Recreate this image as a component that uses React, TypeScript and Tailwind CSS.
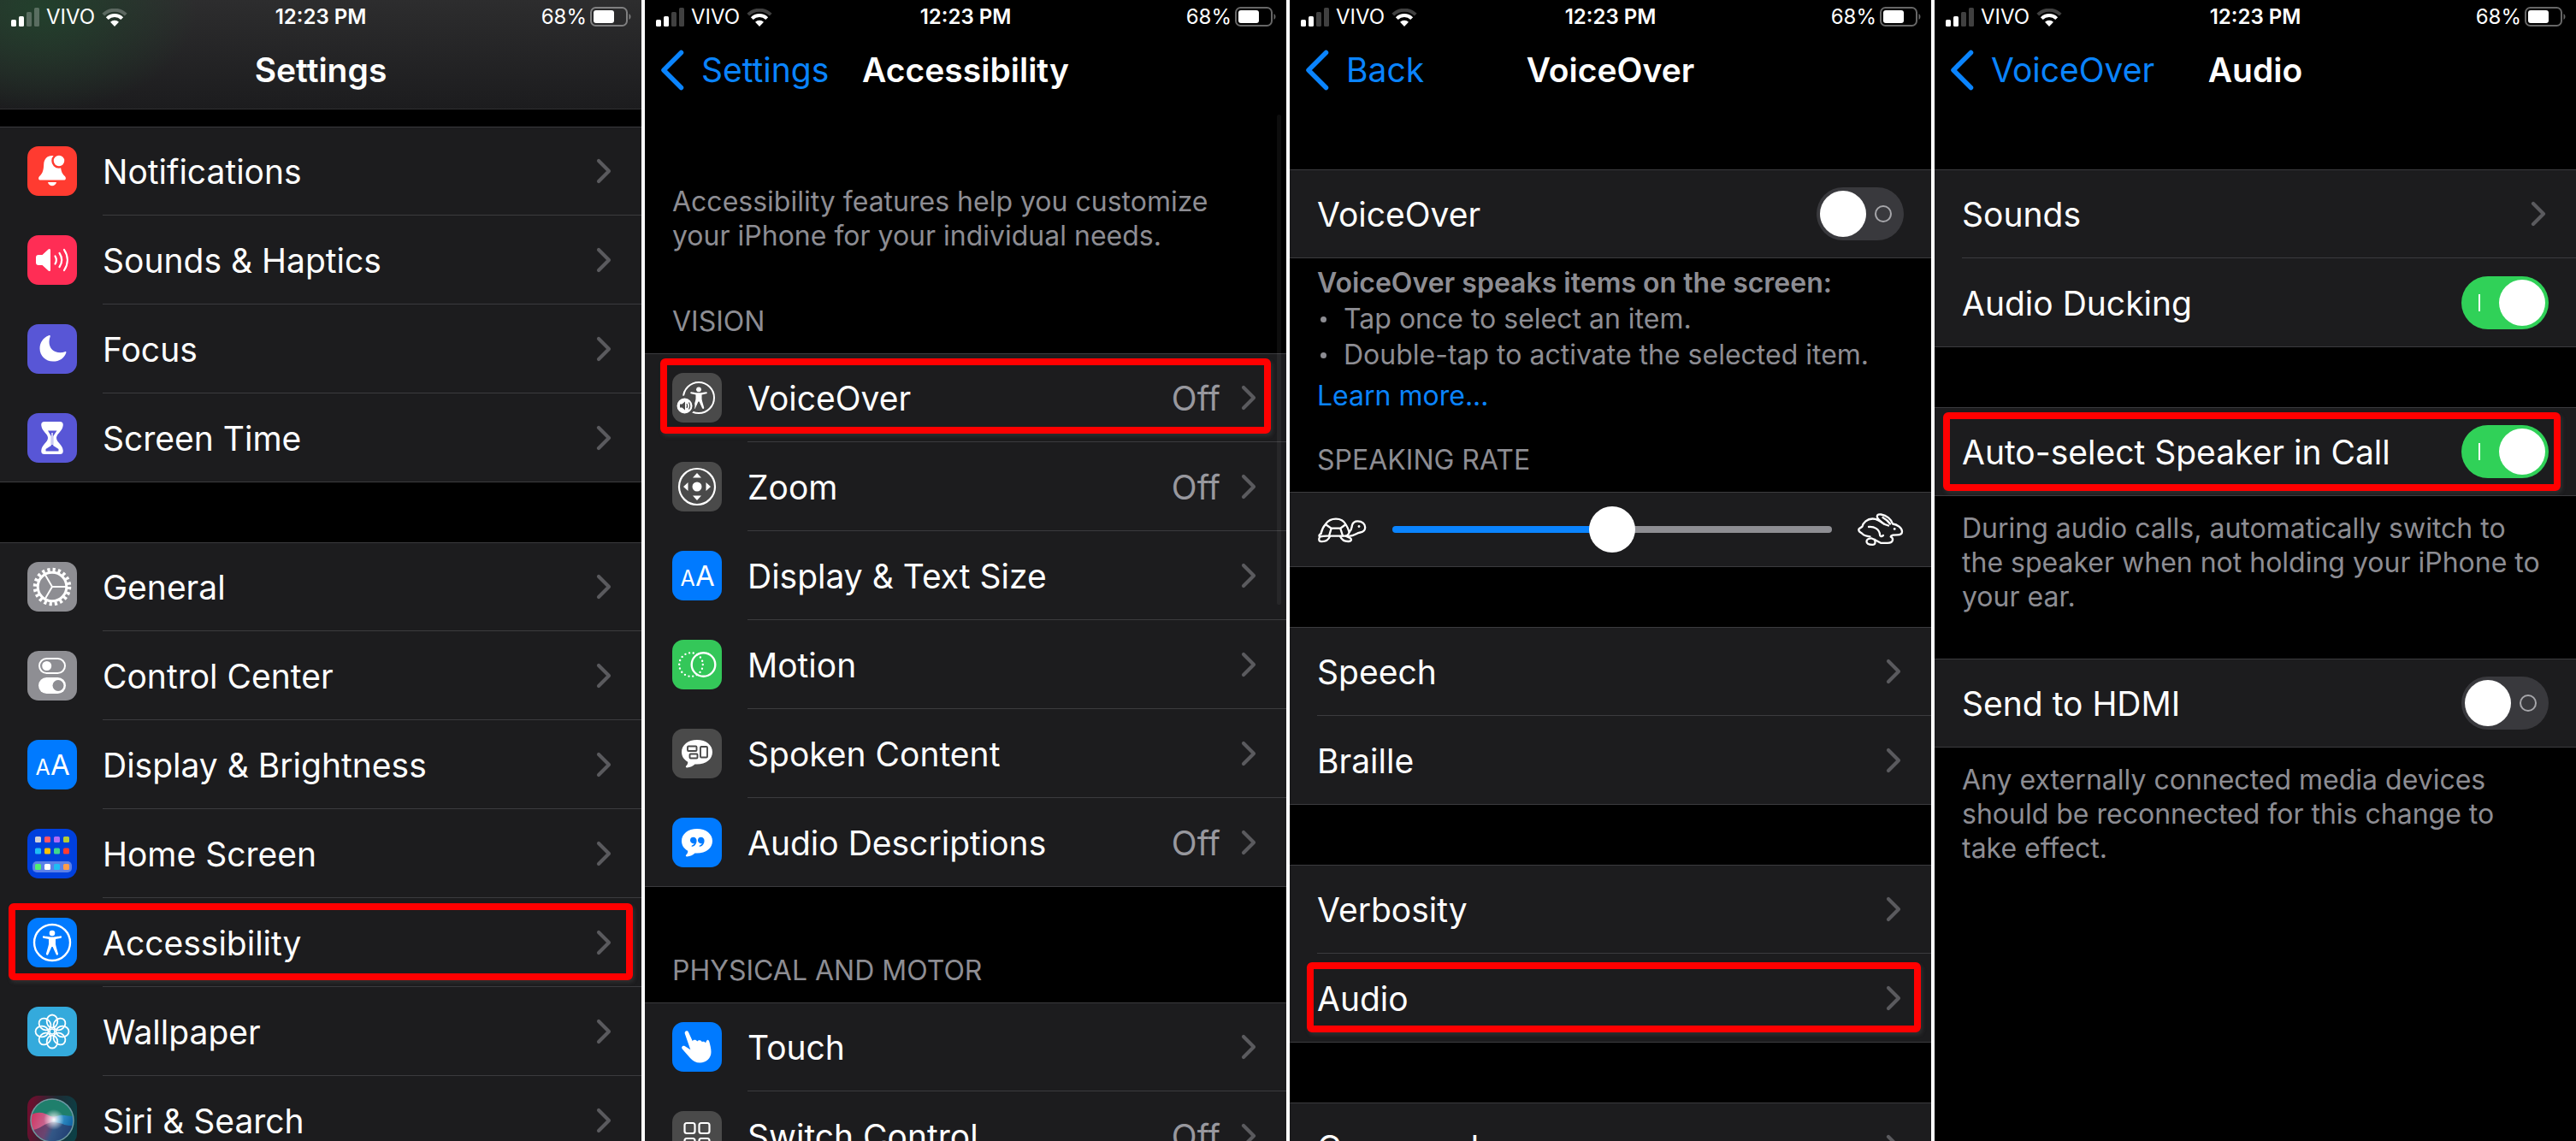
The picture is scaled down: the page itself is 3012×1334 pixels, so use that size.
import React, { useState } from "react";

interface IRow {
  label: string;
  icon?: React.ReactNode;
  value?: string;
  highlight?: string;
}

interface IToggleRow {
  label: string;
  defaultOn?: boolean;
  highlight?: string;
}

/* ---------- status bar ---------- */

const StatusBar = () => (
  <div className="grid h-10 grid-cols-[1fr_auto_1fr] items-center pl-3 pr-3 text-[24px] leading-8">
    <div className="flex items-center gap-2">
      <svg viewBox="0 0 34 22" className="h-[22px] w-[34px]" fill="white">
        <rect x="1" y="14" width="6" height="8" rx="1.5" />
        <rect x="10" y="10" width="6" height="12" rx="1.5" />
        <rect x="19" y="5" width="6" height="17" rx="1.5" opacity="0.25" />
        <rect x="28" y="0" width="6" height="22" rx="1.5" opacity="0.25" />
      </svg>
      <span>VIVO</span>
      <svg viewBox="0 0 30 21" className="h-[21px] w-[30px]" fill="none">
        <path d="M1.8 7.2a18.6 18.6 0 0 1 26.4 0" stroke="white" strokeWidth="4" opacity="0.25" />
        <path d="M6.3 11.7a12.3 12.3 0 0 1 17.4 0" stroke="white" strokeWidth="4" />
        <path d="M10 15.8a7 7 0 0 1 10 0l-5 5.2z" fill="white" />
      </svg>
    </div>
    <span className="font-semibold">12:23 PM</span>
    <div className="flex items-center justify-end gap-1">
      <span>68%</span>
      <svg viewBox="0 0 48 24" className="h-6 w-12" fill="none">
        <rect x="1" y="1" width="42" height="21" rx="5.5" stroke="white" strokeOpacity="0.4" strokeWidth="2" />
        <rect x="4" y="4" width="24" height="15" rx="3" fill="white" />
        <path d="M45.5 8v7c1.4-.7 1.9-2 1.9-3.5s-.5-2.8-1.900-3.500z" fill="white" fillOpacity="0.4" />
      </svg>
    </div>
  </div>
);

const Header = ({
  title,
  back,
  tinted,
}: {
  title: string;
  back?: string;
  tinted?: boolean;
}) => (
  <header
    className={
      tinted
        ? "shrink-0 bg-[radial-gradient(ellipse_180px_120px_at_50px_10px,#22402c_0%,transparent_100%),linear-gradient(to_bottom,#2d2d2e,#1c1c1e)] pb-1 shadow-[inset_0_-1px_#303032]"
        : "shrink-0 pb-1"
    }
  >
    <StatusBar />
    <div className="grid h-[84px] grid-cols-[1fr_auto_1fr] items-center text-[39px] leading-[48px]">
      <div className="flex">
        {back && (
          <a href="#" className="flex items-center gap-5 pl-[18px] text-[#0a84ff]">
            <svg viewBox="0 0 28 48" className="h-12 w-7" fill="none">
              <path
                d="M24.5 3.5L4 24l20.5 20.5"
                stroke="currentColor"
                strokeWidth="5.5"
                strokeLinecap="round"
                strokeLinejoin="round"
              />
            </svg>
            {back}
          </a>
        )}
      </div>
      <h1 className="font-semibold">{title}</h1>
    </div>
  </header>
);

/* ---------- list parts ---------- */

const Chevron = () => (
  <svg viewBox="0 0 18 30" className="h-[30px] w-[18px] shrink-0" fill="none">
    <path
      d="M3 3l12 12L3 27"
      stroke="#5a5a5e"
      strokeWidth="4.2"
      strokeLinecap="round"
      strokeLinejoin="round"
    />
  </svg>
);

const Highlight = ({ inset }: { inset: string }) => (
  <span
    className={`pointer-events-none absolute rounded-md border-8 border-[#ff0000] shadow-[2px_3px_4px_rgba(80,80,80,0.35)] ${inset}`}
  />
);

const Group = ({ children }: { children: React.ReactNode }) => (
  <ul className="shrink-0 bg-[#1c1c1e] shadow-[inset_0_1px_#3b3b3e,inset_0_-1px_#3b3b3e]">
    {children}
  </ul>
);

const Row = ({ label, icon, value, highlight }: IRow) => (
  <li className="group relative">
    <a href="#" className="flex h-26 items-center pl-8">
      {icon && <span className="mr-[30px]">{icon}</span>}
      <span className="flex h-full flex-1 items-center gap-6 border-b border-[#3b3b3e] pr-[35px] text-[39px] leading-[48px] group-last:border-transparent">
        <span className="flex-1 pt-0.5">{label}</span>
        {value && <span className="pt-0.5 text-[#98989e]">{value}</span>}
        <Chevron />
      </span>
    </a>
    {highlight && <Highlight inset={highlight} />}
  </li>
);

const ToggleRow = ({ label, defaultOn = false, highlight }: IToggleRow) => {
  const [on, setOn] = useState<boolean>(defaultOn);

  return (
    <li className="relative">
      <label className="flex h-26 items-center justify-between pr-8 pl-8 text-[39px] leading-[48px]">
        <span className="pt-0.5">{label}</span>
        <input
          type="checkbox"
          role="switch"
          checked={on}
          onChange={(e) => setOn(e.target.checked)}
          className="flex h-[62px] w-[102px] appearance-none items-center justify-between rounded-full bg-[#39393d] px-1 before:size-[54px] before:rounded-full before:bg-white before:content-[''] after:mr-2.5 after:size-5 after:rounded-full after:border-2 after:border-[#a6a6aa] after:content-[''] checked:flex-row-reverse checked:bg-[#30d158] checked:after:mr-0 checked:after:ml-4 checked:after:w-0.5 checked:after:rounded-none checked:after:border-0 checked:after:bg-white"
        />
      </label>
      {highlight && <Highlight inset={highlight} />}
    </li>
  );
};

const SectionTitle = ({ children }: { children: React.ReactNode }) => (
  <h2 className="shrink-0 px-8 pb-[17px] text-[32px] leading-10 text-[#8d8d93]">
    {children}
  </h2>
);

const Note = ({ children }: { children: React.ReactNode }) => (
  <p className="shrink-0 px-8 pt-[18px] text-[32px] leading-10 text-[#8d8d93]">
    {children}
  </p>
);

/* ---------- row icons ---------- */

const Tile = ({ className, children }: { className: string; children: React.ReactNode }) => (
  <svg viewBox="0 0 58 58" className={`block size-[58px] rounded-[13px] ${className}`} fill="none">
    {children}
  </svg>
);

const NotificationsIcon = () => (
  <Tile className="bg-[#ff3b30]">
    <path
      d="M29 11c-6 0-9.5 4-9.8 10-.3 7-1.2 10.5-5 14-1.8 2-1.4 4.6 1.3 4.6h27c2.7 0 3.1-2.6 1.3-4.6-3.8-3.5-4.7-7-5-14-.3-6-3.8-10-9.8-10z"
      fill="white"
    />
    <path d="M24 42h10c-.5 2.600-2.600 4.200-5 4.200S24.500 44.600 24 42z" fill="white" />
    <circle cx="37" cy="17" r="7.5" fill="white" stroke="#ff3b30" strokeWidth="2.5" />
  </Tile>
);

const SoundsIcon = () => (
  <Tile className="bg-[#ff2d55]">
    <path
      d="M13 23h4.5l7-6.5c1.2-1 2.500-.6 2.500 1v23c0 1.600-1.300 2-2.500 1l-7-6.500H13c-2 0-3-1-3-3v-6c0-2 1-3 3-3z"
      fill="white"
    />
    <g stroke="white" strokeWidth="2.2" strokeLinecap="round">
      <path d="M32.5 24.5c1.7 2.8 1.7 6.2 0 9" />
      <path d="M37.5 20.8c3.3 5 3.3 11.4 0 16.4" />
      <path d="M43 17c5 7.5 5 16.5 0 24" />
    </g>
  </Tile>
);

const FocusIcon = () => (
  <Tile className="bg-[#5856d6]">
    <path
      d="M25 13.2C18.5 15.5 14.5 21.5 14.5 28.5 14.5 37 21.5 43.6 30 43.6c7.5 0 13-4 15.3-10.2.3-1-.3-1.6-1.3-1.2-1.7.7-3.5 1-5.5 1-8 0-13-5-13-12.500 0-2.300.4-4.300 1.200-6.200.4-1-.5-1.700-1.700-1.300z"
      fill="white"
    />
  </Tile>
);

const ScreenTimeIcon = () => (
  <Tile className="bg-[#5856d6]">
    <path
      d="M20 10h18c3 0 4 1.600 3.700 4.500C41 21.500 34 24 34 29s7 7.500 7.700 14.500c.3 2.900-.7 4.500-3.700 4.500H20c-3 0-4-1.600-3.700-4.500C17 36.500 24 34 24 29s-7-7.500-7.700-14.500C16 11.600 17 10 20 10z"
      fill="white"
    />
    <path d="M24 20.5h10.5L30.2 27v11l6.300 4v2.500h-15V42l6.300-4V27z" fill="#5856d6" />
    <path d="M29 23v14" stroke="white" strokeWidth="1.4" />
  </Tile>
);

const GeneralIcon = () => (
  <Tile className="bg-[#8e8e93]">
    <circle cx="29" cy="29" r="20" stroke="white" strokeWidth="4.5" strokeDasharray="3.2 3.083" />
    <circle cx="29" cy="29" r="16.8" stroke="white" strokeWidth="3" />
    <path d="M29 29h16M29 29l-8.2-14M29 29l-8.2 14" stroke="white" strokeWidth="2" />
  </Tile>
);

const ControlCenterIcon = () => (
  <Tile className="bg-[#8e8e93]">
    <rect x="14" y="9" width="30" height="17" rx="8.5" stroke="white" strokeWidth="2" />
    <circle cx="22.7" cy="17.5" r="5.5" fill="white" />
    <rect x="13" y="31" width="32" height="19" rx="9.5" fill="white" />
    <circle cx="36" cy="40.5" r="6.5" fill="#8e8e93" />
  </Tile>
);

const TextSizeIcon = () => (
  <Tile className="bg-[#007aff]">
    <text x="9.5" y="41" fontSize="25" fill="white">A</text>
    <text x="27" y="41" fontSize="33" fill="white">A</text>
  </Tile>
);

const homeApps = [
  ["#d1d1d6", "#ff5464", "#b26bf5", "#b4cc34"],
  ["#1fbdf5", "#ffc200", "#3fd68f", "#ff3b30"],
  ["#50f070", "#ffffff", "#1fbdf5", "#ff9d4a"],
];

const HomeScreenIcon = () => (
  <Tile className="bg-[#0040dd]">
    <rect x="6" y="38" width="46" height="13" rx="5" fill="#5b80e8" />
    {homeApps.map((apps, row) =>
      apps.map((color, col) => (
        <rect
          key={`${row}-${col}`}
          x={9 + col * 11}
          y={[9, 22.5, 41][row]}
          width="7"
          height="7"
          rx="1.5"
          fill={color}
        />
      ))
    )}
  </Tile>
);

const Person = () => (
  <>
    <circle cx="29" cy="18" r="3.3" fill="white" />
    <path
      d="M19 21.300s6 1.200 10 1.200 10-1.200 10-1.200c1.400 0 1.500 2.100.2 2.400L33 25.100v5.400c0 2 2.600 9.500 3 11.500.3 1.800-1.800 2.400-2.400.8L29.600 34h-1.200l-4 8.800c-.6 1.600-2.700 1-2.400-.8.4-2 3-9.500 3-11.500v-5.400l-6.200-1.400c-1.300-.3-1.200-2.400.2-2.400z"
      fill="white"
    />
  </>
);

const AccessibilityIcon = () => (
  <Tile className="bg-[#007aff]">
    <circle cx="29" cy="29" r="21" stroke="white" strokeWidth="2.4" />
    <Person />
  </Tile>
);

const WallpaperIcon = () => (
  <Tile className="bg-[#34aadc]">
    {[0, 45, 90, 135, 180, 225, 270, 315].map((angle) => (
      <ellipse
        key={angle}
        cx="29"
        cy="17"
        rx="6.3"
        ry="7.5"
        transform={`rotate(${angle} 29 29)`}
        stroke="white"
        strokeWidth="1.8"
      />
    ))}
    <circle cx="29" cy="29" r="3" stroke="white" strokeWidth="1.6" />
  </Tile>
);

const SiriIcon = () => (
  <Tile className="bg-[linear-gradient(100deg,#6b0f2e_10%,#1f2a33_50%,#0c3f45_90%)]">
    <defs>
      <radialGradient id="siri-glow" cx="0.5" cy="0.5" r="0.5">
        <stop offset="0" stopColor="white" />
        <stop offset="0.25" stopColor="white" stopOpacity="0.7" />
        <stop offset="1" stopColor="white" stopOpacity="0" />
      </radialGradient>
      <linearGradient id="siri-body" x1="0" y1="0.3" x2="1" y2="0.7">
        <stop offset="0" stopColor="#d0305c" />
        <stop offset="0.45" stopColor="#c66f9a" />
        <stop offset="0.6" stopColor="#3a9bd0" />
        <stop offset="1" stopColor="#0a5c9c" />
      </linearGradient>
    </defs>
    <circle cx="29" cy="29" r="25" fill="url(#siri-body)" />
    <path d="M5 22C10 9 20 4.500 29 4.500S50 11 53 24c-6 0-10-2-15-1s-8 3-13 0-12-5-20-1z" fill="#1f7f6c" />
    <path d="M7 40c8-1 13-8 22-9s15 5 24 4c-3 12-13 18.500-24 18.500S11 50 7 40z" fill="#2f2a55" opacity="0.6" />
    <circle cx="29" cy="29" r="25" stroke="#6f9aa0" strokeWidth="1.5" />
    <circle cx="31" cy="28" r="12" fill="url(#siri-glow)" />
  </Tile>
);

const VoiceOverIcon = () => (
  <Tile className="bg-[#4a4a4a]">
    <circle cx="31" cy="29" r="18" stroke="white" strokeWidth="2" />
    <g transform="translate(5.500 3.500) scale(0.88)">
      <Person />
    </g>
    <circle cx="14.5" cy="38.5" r="10.5" fill="white" stroke="#4a4a4a" strokeWidth="3" />
    <path d="M9 36.5h2.5l3.500-3v10l-3.500-3H9z" fill="#4a4a4a" />
    <path d="M17 36c.8 1.5.8 3.5 0 5M19.500 34.500c1.400 2.500 1.400 5.500 0 8" stroke="#4a4a4a" strokeWidth="1.2" />
  </Tile>
);

const ZoomIcon = () => (
  <Tile className="bg-[#4a4a4a]">
    <circle cx="29" cy="29" r="21" stroke="white" strokeWidth="2.2" />
    <circle cx="29" cy="29" r="5.5" fill="white" />
    <path d="M29 13l5 5.5H24zM29 45l5-5.500H24zM13 29l5.500-5v10zM45 29l-5.500-5v10z" fill="white" />
  </Tile>
);

const MotionIcon = () => (
  <Tile className="bg-[#34c759]">
    <circle
      cx="22"
      cy="29"
      r="13.8"
      stroke="white"
      strokeWidth="2.4"
      strokeLinecap="round"
      strokeDasharray="0 4.817"
    />
    <circle cx="36.5" cy="29" r="13.8" stroke="white" strokeWidth="2.4" />
  </Tile>
);

const Bubble = () => (
  <path
    d="M29 13c-10.5 0-18 6-18 14.300 0 5 2.700 9 7.200 11.500.3 1.700-.5 3.300-2 4.800-.8 1-.2 1.900 1 1.800 4-.3 7-1.800 9.300-4 .8.200 1.700.2 2.500.2 10.500 0 18-6 18-14.300S39.500 13 29 13z"
    fill="white"
  />
);

const SpokenContentIcon = () => (
  <Tile className="bg-[#4a4a4a]">
    <Bubble />
    <g stroke="#4a4a4a" strokeWidth="1.9">
      <rect x="18" y="20.5" width="10.5" height="5.5" rx="1" />
      <rect x="20.5" y="29.5" width="9" height="5" rx="1" />
      <rect x="33" y="21" width="8" height="12.5" rx="1" />
    </g>
  </Tile>
);

const AudioDescriptionsIcon = () => (
  <Tile className="bg-[#007aff]">
    <Bubble />
    <g fill="#007aff">
      <path d="M24.700 22.700a3.800 3.800 0 0 0-3.700 3.900c0 2.100 1.600 3.600 3.500 3.600.6 0 1 0 1.400-.2-.5 1.200-1.500 2-2.900 2.500-.8.500-.4 1.500.6 1.300 3.200-.9 5-3.700 5-6.900 0-2.500-1.700-4.200-3.900-4.200z" />
      <path d="M33.700 22.700a3.800 3.800 0 0 0-3.700 3.900c0 2.100 1.600 3.600 3.500 3.600.6 0 1 0 1.400-.2-.5 1.200-1.500 2-2.900 2.500-.8.500-.4 1.500.6 1.300 3.200-.9 5-3.700 5-6.900 0-2.500-1.700-4.200-3.900-4.200z" />
    </g>
  </Tile>
);

const TouchIcon = () => (
  <Tile className="bg-[#007aff]">
    <path
      d="M14.8 13.5c-1-3 2.900-4.600 4.200-1.700l4.800 10.400c1-1.700 4.200-2 5.400.3 1.200-1.800 4.600-1.800 5.600.7 1.400-1 3.600-.4 4.200 1.200 1.600-5 3.600-4.500 4.500-1 .8 3.200 2 7 2 11.600 0 7.500-6 12.500-13 12.500-5 0-8.500-2-11.500-5.500l-9.200-10.500c-1.800-2.500.7-4.700 3.200-3.300l6.300 4z"
      fill="white"
    />
  </Tile>
);

const SwitchControlIcon = () => (
  <Tile className="bg-[#4a4a4a]">
    <g stroke="white" strokeWidth="2.2">
      <rect x="14.5" y="14" width="12" height="12" rx="2.5" />
      <rect x="31.5" y="14" width="12" height="12" rx="2.5" />
      <rect x="14.5" y="32" width="12" height="12" rx="2.5" />
      <rect x="31.5" y="32" width="12" height="12" rx="2.5" />
    </g>
  </Tile>
);

const TortoiseIcon = () => (
  <svg
    viewBox="0 0 58 32"
    className="h-8 w-[58px] shrink-0"
    fill="none"
    stroke="white"
    strokeWidth="2.3"
    strokeLinecap="round"
    strokeLinejoin="round"
  >
    <path d="M4.500 21C5.500 16 7.500 12.500 10 9.700 13 5.500 17 3.700 22 3.700s9 1.800 11.500 6.300c1.800 2.800 3 5.500 4 9" />
    <path d="M10.500 10.500l6.200 4.200h10.500l5.800-4.200M16.700 14.700L14 23.500M27.200 14.700l2.800 8.800" />
    <path d="M4.500 21C2.500 22 2 23 2.800 24.500c3-.5 5-.8 8-.8h21c3 0 5-1.500 6-4.700" />
    <path d="M38 18.500c2.500-2 2.300-4.500 3-7.500.8-3 3.300-4.700 6.500-4.700 5 0 8.700 3 8.700 7.200 0 3.500-2 5.500-5.700 6-5.500.7-6.500 5-14.500 4.300" />
    <path d="M2.800 25.500c-1.600 2.800-.3 4.700 2.700 4.700 4 0 8-2.200 9.500-6M27 24c1.500 3.700 4.500 6 9.500 6 4 0 4.500-3 1.500-4.200l-4.500-2" />
    <circle cx="49" cy="12.5" r="1.4" fill="white" stroke="none" />
  </svg>
);

const HareIcon = () => (
  <svg
    viewBox="0 0 54 38"
    className="h-[38px] w-[54px] shrink-0"
    fill="none"
    stroke="white"
    strokeWidth="2.3"
    strokeLinecap="round"
    strokeLinejoin="round"
  >
    <path d="M30.500 12.500C26 8.500 22 6.500 17.500 6.500 11 6.500 6.500 11 5.500 15.500 4 17.500 1.200 17 1.200 19.500S4 22.500 5.500 24c2 2 5 3 9 3.300" />
    <path d="M36 14.500C30 13 22.800 7 22.800 3.800c0-2.300 2.200-2.600 4.700-2.300C34 2.500 39.500 7 41 12.500c5.500.5 11 5 11 9 0 3-2 3.800-5.500 3.800-4 0-7.500 0-7.800 2.200 1.800 1 2.800 2 2.300 4-.5 2.500-3 3.300-6 3.300h-8L20 31" />
    <path d="M20 31c1 3 1 5.800-2.500 5.800s-7-.8-7-3.800c0-2.500 2.500-3.500 5.500-3.700l4 1.700" />
    <path d="M13 16c6.500-.5 12.500 2.500 13 9 0 2.500 2 2.500 4 1M29.500 5c3.500 2 6.500 4.500 8.500 7.500" />
    <circle cx="43.200" cy="18.400" r="1.400" fill="white" stroke="none" />
  </svg>
);

/* ---------- screens ---------- */

const Screen = ({ children }: { children: React.ReactNode }) => (
  <section className="relative flex min-w-0 flex-col overflow-hidden bg-black">
    {children}
  </section>
);

const Spacer = () => <div className="h-[70px] shrink-0" />;

const SettingsScreen = () => (
  <Screen>
    <Header title="Settings" tinted />
    <div className="h-5 shrink-0" />
    <Group>
      <Row label="Notifications" icon={<NotificationsIcon />} />
      <Row label="Sounds & Haptics" icon={<SoundsIcon />} />
      <Row label="Focus" icon={<FocusIcon />} />
      <Row label="Screen Time" icon={<ScreenTimeIcon />} />
    </Group>
    <Spacer />
    <Group>
      <Row label="General" icon={<GeneralIcon />} />
      <Row label="Control Center" icon={<ControlCenterIcon />} />
      <Row label="Display & Brightness" icon={<TextSizeIcon />} />
      <Row label="Home Screen" icon={<HomeScreenIcon />} />
      <Row label="Accessibility" icon={<AccessibilityIcon />} highlight="inset-x-2.5 top-1.5 bottom-2" />
      <Row label="Wallpaper" icon={<WallpaperIcon />} />
      <Row label="Siri & Search" icon={<SiriIcon />} />
    </Group>
  </Screen>
);

const AccessibilityScreen = () => (
  <Screen>
    <Header title="Accessibility" back="Settings" />
    <p className="shrink-0 px-8 pt-[88px] pb-[60px] text-[32px] leading-10 text-[#8d8d93]">
      Accessibility features help you customize your iPhone for your individual needs.
    </p>
    <SectionTitle>VISION</SectionTitle>
    <Group>
      <Row label="VoiceOver" icon={<VoiceOverIcon />} value="Off" highlight="inset-x-[18px] top-1.5 bottom-2.5" />
      <Row label="Zoom" icon={<ZoomIcon />} value="Off" />
      <Row label="Display & Text Size" icon={<TextSizeIcon />} />
      <Row label="Motion" icon={<MotionIcon />} />
      <Row label="Spoken Content" icon={<SpokenContentIcon />} />
      <Row label="Audio Descriptions" icon={<AudioDescriptionsIcon />} value="Off" />
    </Group>
    <div className="h-[78px] shrink-0" />
    <SectionTitle>PHYSICAL AND MOTOR</SectionTitle>
    <Group>
      <Row label="Touch" icon={<TouchIcon />} />
      <Row label="Switch Control" icon={<SwitchControlIcon />} value="Off" />
    </Group>
    {/* scroll indicator */}
    <span className="absolute top-[134px] right-1.5 h-[573px] w-[5px] rounded-full bg-white/5" />
  </Screen>
);

const VoiceOverScreen = () => {
  const [rate, setRate] = useState<number>(50);

  return (
    <Screen>
      <Header title="VoiceOver" back="Back" />
      <Spacer />
      <Group>
        <ToggleRow label="VoiceOver" />
      </Group>
      <div className="shrink-0 px-8 pt-2 pb-[34px] text-[32px] leading-[42px] text-[#8d8d93]">
        <p className="font-semibold">VoiceOver speaks items on the screen:</p>
        <ul>
          {["Tap once to select an item.", "Double-tap to activate the selected item."].map((tip) => (
            <li key={tip} className="flex items-center gap-5 pl-1">
              <span className="size-[7px] rounded-full bg-[#8d8d93]" />
              {tip}
            </li>
          ))}
        </ul>
        <a href="#" className="block pt-1.5 text-[#0a84ff]">
          Learn more...
        </a>
      </div>
      <SectionTitle>SPEAKING RATE</SectionTitle>
      <Group>
        <li className="flex h-[88px] items-center gap-[30px] pr-8 pl-8">
          <TortoiseIcon />
          <input
            type="range"
            aria-label="Speaking rate"
            min={0}
            max={100}
            value={rate}
            onChange={(e) => setRate(Number(e.target.value))}
            style={{ "--fill": `${rate}%` } as React.CSSProperties}
            className="h-[54px] min-w-0 flex-1 appearance-none bg-transparent [&::-webkit-slider-runnable-track]:h-2 [&::-webkit-slider-runnable-track]:rounded-full [&::-webkit-slider-runnable-track]:bg-[linear-gradient(to_right,#0a84ff_var(--fill),#8e8e93_var(--fill))] [&::-webkit-slider-thumb]:-mt-[23px] [&::-webkit-slider-thumb]:size-[54px] [&::-webkit-slider-thumb]:appearance-none [&::-webkit-slider-thumb]:rounded-full [&::-webkit-slider-thumb]:bg-white"
          />
          <HareIcon />
        </li>
      </Group>
      <Spacer />
      <Group>
        <Row label="Speech" />
        <Row label="Braille" />
      </Group>
      <Spacer />
      <Group>
        <Row label="Verbosity" />
        <Row label="Audio" highlight="right-3 left-5 top-2.5 bottom-3" />
      </Group>
      <Spacer />
      <Group>
        <Row label="Commands" />
      </Group>
    </Screen>
  );
};

const AudioScreen = () => (
  <Screen>
    <Header title="Audio" back="VoiceOver" />
    <Spacer />
    <Group>
      <Row label="Sounds" />
      <ToggleRow label="Audio Ducking" defaultOn />
    </Group>
    <Spacer />
    <Group>
      <ToggleRow
        label="Auto-select Speaker in Call"
        defaultOn
        highlight="right-[18px] left-2.5 top-1.5 bottom-1.5"
      />
    </Group>
    <Note>
      During audio calls, automatically switch to the speaker when not holding your iPhone to your ear.
    </Note>
    <div className="h-[52px] shrink-0" />
    <Group>
      <ToggleRow label="Send to HDMI" />
    </Group>
    <Note>
      Any externally connected media devices should be reconnected for this change to take effect.
    </Note>
  </Screen>
);

export default function App() {
  return (
    <main className="grid h-screen grid-cols-4 gap-1 overflow-hidden bg-white font-[Inter,sans-serif] text-white">
      <SettingsScreen />
      <AccessibilityScreen />
      <VoiceOverScreen />
      <AudioScreen />
    </main>
  );
}
